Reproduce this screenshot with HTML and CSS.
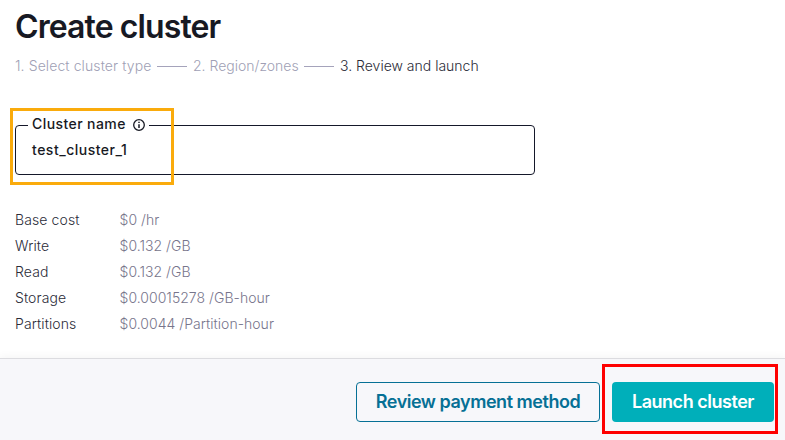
FILE: index.html
```
<!DOCTYPE html>
<html lang="en">
<head>
<meta charset="utf-8">
<title>Create cluster</title>
<link rel="stylesheet" href="styles.css">
</head>
<body>
<main class="page">
  <h1 class="title">Create cluster</h1>
  <ol class="steps">
    <li class="step step-type">1. Select cluster type</li>
    <li class="line"></li>
    <li class="step step-region">2. Region/zones</li>
    <li class="line"></li>
    <li class="step step-current">3. Review and launch</li>
  </ol>
  <div class="field">
    <div class="label"><span class="label-text">Cluster name</span>
      <svg class="info" viewBox="0 0 12 12"><circle cx="6" cy="6" r="5.3" fill="none" stroke="currentColor" stroke-width="1.3"/><path d="M6 5.2V9M6 2.8V4.1" stroke="currentColor" stroke-width="1.5"/></svg>
    </div>
    <span class="value">test_cluster_1</span>
    <div class="mark mark-name"></div>
  </div>
  <dl class="costs">
    <dt>Base cost</dt><dd>$0 /hr</dd>
    <dt>Write</dt><dd>$0.132 /GB</dd>
    <dt>Read</dt><dd>$0.132 /GB</dd>
    <dt>Storage</dt><dd>$0.00015278 /GB-hour</dd>
    <dt>Partitions</dt><dd>$0.0044 /Partition-hour</dd>
  </dl>
</main>
<footer class="footer">
  <button class="btn btn-secondary"><span>Review payment method</span></button>
  <div class="launch">
    <button class="btn btn-primary"><span>Launch cluster</span></button>
    <div class="mark mark-launch"></div>
  </div>
</footer>
</body>
</html>
```
FILE: styles.css
```
* { box-sizing: border-box; }
body {
  margin: 0;
  width: 785px;
  height: 440px;
  overflow: hidden;
  display: flex;
  flex-direction: column;
  background: #fff;
  color: #171923;
  font-family: Inter, sans-serif;
}
.page { height: 358px; padding: 7px 15px 0; }
.title { margin: 0; font-size: 32px; line-height: 40px; font-weight: 600; letter-spacing: -0.9px; white-space: nowrap; }
.steps {
  list-style: none;
  display: flex;
  align-items: center;
  margin: 9px 0 0;
  padding: 0;
  height: 20px;
  font-size: 14px;
  line-height: 20px;
  font-weight: 300;
  white-space: nowrap;
}
.step { color: #a09fb5; }
.step-type { width: 136px; letter-spacing: 0.1px; }
.step-region { width: 105px; }
.step-current { color: #2b2c38; }
.line { width: 30px; height: 1px; margin: 0 6px; background: #a5a3bb; }
.field {
  position: relative;
  width: 520px;
  height: 50px;
  margin-top: 49px;
  padding: 15px 16px;
  border: 1px solid #15182a;
  border-radius: 4px;
}
.label {
  position: absolute;
  top: -12px;
  left: 12px;
  display: flex;
  align-items: center;
  gap: 7px;
  height: 20px;
  padding: 0 4px;
  background: #fff;
  font-size: 14px;
  line-height: 18px;
  font-weight: 500;
  letter-spacing: 0.42px;
  white-space: nowrap;
}
.label-text { margin-top: -1px; }
.info { width: 12px; height: 12px; margin-top: 2px; }
.value { display: block; font-size: 14px; line-height: 18px; font-weight: 500; letter-spacing: 0.5px; }
.mark { position: absolute; border: 3px solid; pointer-events: none; }
.mark-name { top: -18px; left: -6px; width: 164px; height: 77px; border-color: #faab0c; }
.costs {
  display: grid;
  grid-template-columns: 104.5px auto;
  grid-auto-rows: 26px;
  margin: 32px 0 0;
  font-size: 14px;
  line-height: 26px;
  font-weight: 300;
  white-space: nowrap;
}
.costs dt { color: #2b2c38; letter-spacing: 0.1px; }
.costs dd { margin: 0; color: #77758c; letter-spacing: 0.03px; }
.footer {
  display: flex;
  justify-content: flex-end;
  gap: 12px;
  height: 82px;
  padding: 23px 11px 0 0;
  border-top: 1px solid #dcdce0;
  background: #f7f7fa;
  box-shadow: 0 -2px 8px rgba(0, 0, 0, 0.04);
}
.launch { position: relative; }
.btn {
  height: 40px;
  padding: 0;
  border-radius: 4px;
  font: 600 18px/38px Inter, sans-serif;
  letter-spacing: -0.47px;
  white-space: nowrap;
}
.btn-secondary { width: 244px; border: 1px solid #067095; background: transparent; color: #067095; }
.btn-primary { width: 162px; border: 0; background: #00afba; color: #fff; }
.mark-launch { top: -18px; left: -10px; width: 176px; height: 70px; border-color: #fe0000; }
```
